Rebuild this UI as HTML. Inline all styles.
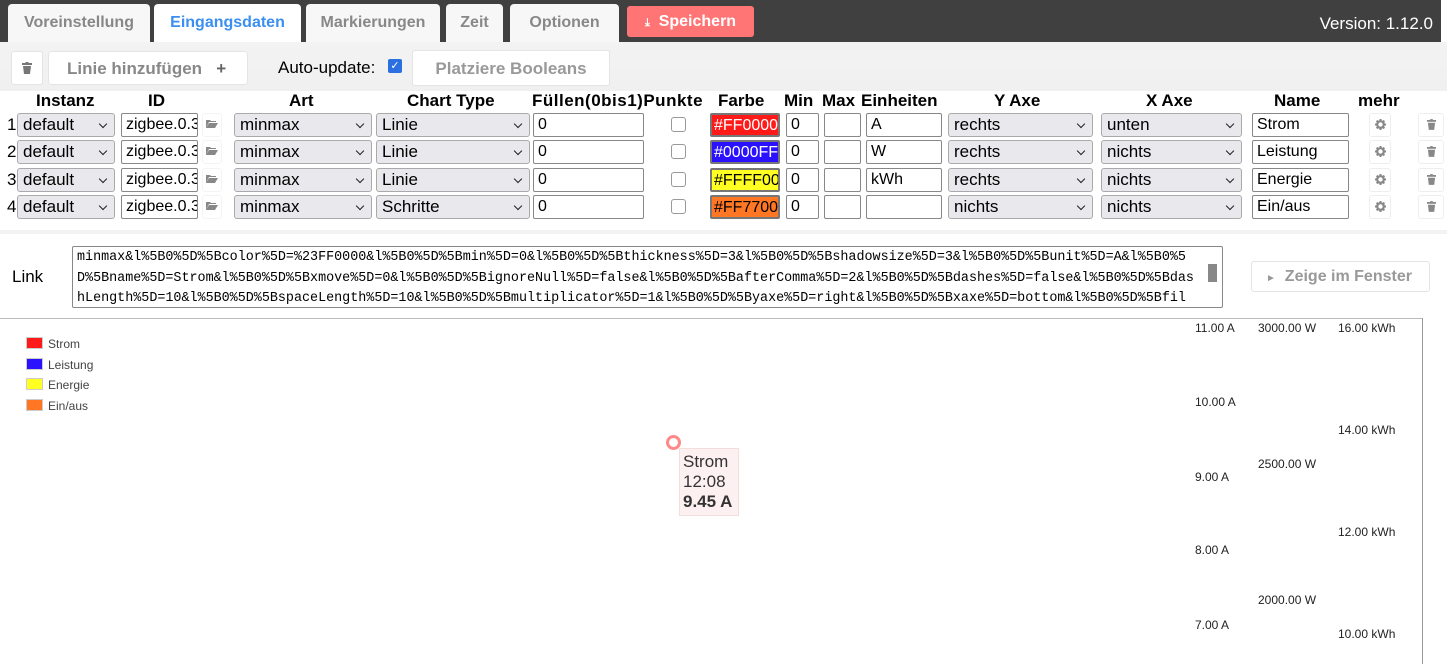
<!DOCTYPE html><html><head><meta charset="utf-8"><style>
*{box-sizing:border-box}body{margin:0;width:1447px;height:664px;overflow:hidden;font-family:"Liberation Sans",sans-serif;background:#fff;position:relative}
.a{position:absolute}
.tab{position:absolute;top:4px;height:38px;background:#f7f7f7;border-radius:4px 4px 0 0;color:#888;font-weight:bold;font-size:16px;text-align:center;line-height:38px}
.sel{position:absolute;height:24px;background:#e9e9ed;border:1px solid #aaa;border-radius:3px;font-size:17px;line-height:22px;padding-left:5px}
.sel:after{content:"";position:absolute;right:8px;top:7px;width:5px;height:5px;border-right:1.5px solid #222;border-bottom:1.5px solid #222;transform:rotate(45deg)}
.inp{position:absolute;height:24px;background:#fff;border:1px solid #888;border-radius:2px;font-size:16px;line-height:22px;padding-left:4px;overflow:hidden;white-space:nowrap}
.h{position:absolute;top:91px;font-weight:bold;font-size:17px}
.cb{position:absolute;width:15px;height:15px;border:1px solid #999;border-radius:3px;background:#fff}
.ib{position:absolute;width:22px;height:24px;border:1px solid #eee;border-radius:3px;background:#fff;text-align:center}
.ib svg{margin-top:5px}
.ax{position:absolute;font-size:12px;color:#222}
</style></head><body>
<div class="a" style="left:0;top:0;width:1441px;height:42px;background:#404040"></div>
<div class="a" style="left:0;top:42px;width:1447px;height:49px;background:linear-gradient(#f3f3f3,#f0f0f0)"></div>
<div class="tab" style="left:8px;width:142px">Voreinstellung</div>
<div class="tab" style="left:154px;width:147px;background:#fff;color:#3b8ff0">Eingangsdaten</div>
<div class="tab" style="left:306px;width:134px">Markierungen</div>
<div class="tab" style="left:446px;width:57px">Zeit</div>
<div class="tab" style="left:510px;width:109px">Optionen</div>
<div class="a" style="left:627px;top:6px;width:127px;height:31px;background:#ff7474;border-radius:3px;color:#fff;font-weight:bold;font-size:16px;line-height:31px;text-align:center"><span style="font-size:11px">⤓</span>&nbsp; Speichern</div>
<div class="a" style="right:14px;top:14px;color:#fff;font-size:17px">Version: 1.12.0</div>
<div class="a" style="left:11px;top:51px;width:32px;height:34px;background:#fff;border:1px solid #e4e4e4;border-radius:3px;text-align:center"><svg width="10" height="12" viewBox="0 0 10 12" style="margin-top:10px"><rect x="0" y="1" width="10" height="2" fill="#777"/><rect x="3.5" y="0" width="3" height="1.5" fill="#777"/><path d="M1 4h8l-1 8H2z" fill="#777"/></svg></div>
<div class="a" style="left:48px;top:51px;width:200px;height:34px;background:#fff;border:1px solid #e4e4e4;border-radius:3px;line-height:34px;color:#888;font-weight:bold;font-size:17px;padding-left:18px">Linie hinzufügen &nbsp;&nbsp;<span style="color:#666">+</span></div>
<div class="a" style="left:278px;top:58px;font-size:17px">Auto-update:</div>
<div class="a" style="left:388px;top:59px;width:14px;height:14px;background:#2b6fe0;border-radius:2px;color:#fff;font-size:11px;line-height:14px;text-align:center">✓</div>
<div class="a" style="left:412px;top:50px;width:198px;height:36px;background:#fff;border:1px solid #e4e4e4;border-radius:3px;line-height:36px;color:#999;font-weight:bold;font-size:17px;text-align:center">Platziere Booleans</div>
<div class="a" style="left:0;top:230px;width:1447px;height:4px;background:#f2f2f2"></div>
<div class="h" style="left:36px">Instanz</div><div class="h" style="left:148px">ID</div><div class="h" style="left:289px">Art</div><div class="h" style="left:407px">Chart Type</div><div class="h" style="left:532px;letter-spacing:0.5px">Füllen(0bis1)Punkte</div><div class="h" style="left:718px">Farbe</div><div class="h" style="left:784px">Min</div><div class="h" style="left:822px">Max</div><div class="h" style="left:861px">Einheiten</div><div class="h" style="left:994px">Y Axe</div><div class="h" style="left:1146px">X Axe</div><div class="h" style="left:1274px">Name</div><div class="h" style="left:1358px">mehr</div>
<div id="rows"></div>
<script>
var T='<svg width="9" height="11" viewBox="0 0 10 12"><rect x="0" y="1" width="10" height="2" fill="#888"/><rect x="3.5" y="0" width="3" height="1.5" fill="#888"/><path d="M1 4h8l-1 8H2z" fill="#888"/></svg>';
var G='<svg width="11" height="11" viewBox="0 0 12 12"><circle cx="6" cy="6" r="3.6" fill="none" stroke="#888" stroke-width="2.4"/><g stroke="#888" stroke-width="2.2"><path d="M6 0v3M6 9v3M0 6h3M9 6h3M1.8 1.8l2 2M8.2 8.2l2 2M1.8 10.2l2-2M8.2 3.8l2-2"/></g></svg>';
var F='<svg width="12" height="9" viewBox="0 0 12 9"><path d="M0 1h4l1 1h5v1H3L0 9z" fill="#888"/><path d="M3 4h9l-3 5H0z" fill="#888"/></svg>';
var R=[[113,"Linie","#FF0000","#ff1a1a","#fff","A","rechts","unten","Strom"],[140,"Linie","#0000FF","#2a12ff","#fff","W","rechts","nichts","Leistung"],[168,"Linie","#FFFF00","#ffff22","#000","kWh","rechts","nichts","Energie"],[195,"Schritte","#FF7700","#ff7722","#000","","nichts","nichts","Ein/aus"]],h="";
R.forEach(function(r,i){var y=r[0];
h+='<div class="a" style="left:7px;top:'+(y+2)+'px;font-size:17px">'+(i+1)+'</div>'+
'<div class="sel" style="left:17px;top:'+y+'px;width:98px">default</div>'+
'<div class="inp" style="left:121px;top:'+y+'px;width:77px">zigbee.0.3</div>'+
'<div class="ib" style="left:202px;top:'+y+'px;width:20px;border-color:#f4f4f4">'+F+'</div>'+
'<div class="sel" style="left:234px;top:'+y+'px;width:138px">minmax</div>'+
'<div class="sel" style="left:376px;top:'+y+'px;width:154px">'+r[1]+'</div>'+
'<div class="inp" style="left:533px;top:'+y+'px;width:111px">0</div>'+
'<div class="cb" style="left:671px;top:'+(y+4)+'px"></div>'+
'<div class="inp" style="left:710px;top:'+y+'px;width:70px;background:'+r[3]+';color:'+r[4]+';border:2px solid #777;padding-left:2px">'+r[2]+'</div>'+
'<div class="inp" style="left:786px;top:'+y+'px;width:33px">0</div>'+
'<div class="inp" style="left:824px;top:'+y+'px;width:37px"></div>'+
'<div class="inp" style="left:866px;top:'+y+'px;width:76px">'+r[5]+'</div>'+
'<div class="sel" style="left:948px;top:'+y+'px;width:145px">'+r[6]+'</div>'+
'<div class="sel" style="left:1101px;top:'+y+'px;width:141px">'+r[7]+'</div>'+
'<div class="inp" style="left:1252px;top:'+y+'px;width:97px">'+r[8]+'</div>'+
'<div class="ib" style="left:1369px;top:'+y+'px">'+G+'</div>'+
'<div class="ib" style="left:1418px;top:'+y+'px;width:26px">'+T+'</div>';});
document.getElementById("rows").innerHTML=h;
</script>
<div class="a" style="left:12px;top:267px;font-size:17px">Link</div>
<div class="a" style="left:72px;top:246px;width:1151px;height:62px;border:1px solid #888;border-radius:2px;font-family:'Liberation Mono',monospace;font-size:13.4px;line-height:20.5px;padding:1px 4px;overflow:hidden;white-space:pre">minmax&amp;l%5B0%5D%5Bcolor%5D=%23FF0000&amp;l%5B0%5D%5Bmin%5D=0&amp;l%5B0%5D%5Bthickness%5D=3&amp;l%5B0%5D%5Bshadowsize%5D=3&amp;l%5B0%5D%5Bunit%5D=A&amp;l%5B0%5
D%5Bname%5D=Strom&amp;l%5B0%5D%5Bxmove%5D=0&amp;l%5B0%5D%5BignoreNull%5D=false&amp;l%5B0%5D%5BafterComma%5D=2&amp;l%5B0%5D%5Bdashes%5D=false&amp;l%5B0%5D%5Bdas
hLength%5D=10&amp;l%5B0%5D%5BspaceLength%5D=10&amp;l%5B0%5D%5Bmultiplicator%5D=1&amp;l%5B0%5D%5Byaxe%5D=right&amp;l%5B0%5D%5Bxaxe%5D=bottom&amp;l%5B0%5D%5Bfil</div>
<div class="a" style="left:1206px;top:248px;width:15px;height:58px;background:#fff"></div>
<div class="a" style="left:1208px;top:264px;width:9px;height:18px;background:#888"></div>
<div class="a" style="left:1251px;top:261px;width:179px;height:31px;border:1px solid #e4e4e4;border-radius:3px;color:#999;font-weight:bold;font-size:16px;line-height:30px;padding-left:14px"><span style="font-size:10px">►</span>&nbsp; Zeige im Fenster</div>
<div class="a" style="left:0;top:318px;width:1423px;height:1px;background:#bbb"></div>
<div class="a" style="left:1422px;top:318px;width:1px;height:346px;background:#999"></div>
<div class="a" style="left:26px;top:334px;font-size:12px;color:#444;line-height:20.7px">
<div><span style="display:inline-block;width:17px;height:12px;background:#ff1a1a;border:1px solid #ccc;vertical-align:-1px;margin-right:5px"></span>Strom</div>
<div><span style="display:inline-block;width:17px;height:12px;background:#2a12ff;border:1px solid #ccc;vertical-align:-1px;margin-right:5px"></span>Leistung</div>
<div><span style="display:inline-block;width:17px;height:12px;background:#ffff22;border:1px solid #ccc;vertical-align:-1px;margin-right:5px"></span>Energie</div>
<div><span style="display:inline-block;width:17px;height:12px;background:#ff7722;border:1px solid #ccc;vertical-align:-1px;margin-right:5px"></span>Ein/aus</div></div>
<div class="ax" style="left:1195px;top:321px">11.00 A</div><div class="ax" style="left:1195px;top:395px">10.00 A</div><div class="ax" style="left:1195px;top:470px">9.00 A</div><div class="ax" style="left:1195px;top:543px">8.00 A</div><div class="ax" style="left:1195px;top:618px">7.00 A</div>
<div class="ax" style="left:1258px;top:321px">3000.00 W</div><div class="ax" style="left:1258px;top:457px">2500.00 W</div><div class="ax" style="left:1258px;top:593px">2000.00 W</div>
<div class="ax" style="left:1338px;top:321px">16.00 kWh</div><div class="ax" style="left:1338px;top:423px">14.00 kWh</div><div class="ax" style="left:1338px;top:525px">12.00 kWh</div><div class="ax" style="left:1338px;top:627px">10.00 kWh</div>
<div class="a" style="left:666px;top:435px;width:15px;height:15px;border:3px solid #f88;border-radius:50%;background:#fff"></div>
<div class="a" style="left:679px;top:448px;width:60px;height:68px;background:#fdf0f0;border:1px solid #f3dede;font-size:17px;color:#333;padding:3px 0 0 3px;line-height:20px">Strom<br>12:08<br><b>9.45 A</b></div>
</body></html>
